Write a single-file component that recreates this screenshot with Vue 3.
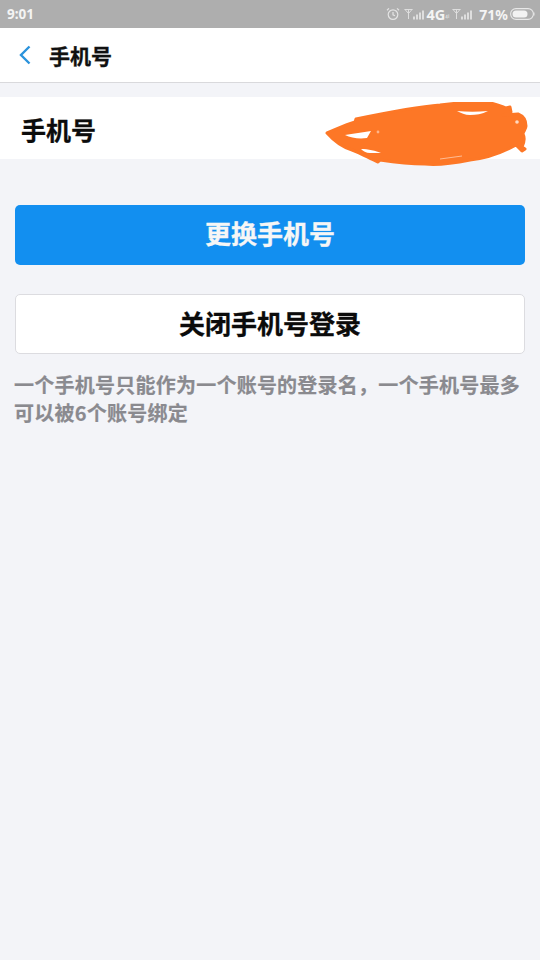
<script setup>
const sigBars = [3, 5, 7, 9]
</script>

<template>
  <div class="page">
    <div class="status">
      <span class="time">9:01</span>
      <div class="status-right">
        <svg class="alarm" width="14" height="14" viewBox="0 0 14 14" fill="none" stroke="#e4e4e4" stroke-width="1.2">
          <circle cx="7" cy="7.6" r="4.8" />
          <path d="M7 5v2.8l2 1M1 3.2 3 1.4M13 3.2 11 1.4" />
        </svg>
        <svg class="sig" width="21" height="13" viewBox="0 0 21 13" fill="none" stroke="#dedede" stroke-width="1">
          <path d="M0.500 1.500h8M1 1.500 4.500 5.500 8 1.500M4.500 1.500V11" />
          <path v-for="(h, i) in sigBars" :key="i" :d="`M${10 + i * 3} 11.500v-${h}`" stroke-width="2" />
        </svg>
        <span class="net">4G</span>
        <span class="net-small">₄ᵢ</span>
        <svg class="sig" width="21" height="13" viewBox="0 0 21 13" fill="none" stroke="#dedede" stroke-width="1">
          <path d="M0.500 1.500h8M1 1.500 4.500 5.500 8 1.500M4.500 1.500V11" />
          <path v-for="(h, i) in sigBars" :key="i" :d="`M${10 + i * 3} 11.500v-${h}`" stroke-width="2" />
        </svg>
        <span class="pct">71%</span>
        <svg class="batt" width="25" height="12" viewBox="0 0 25 12" fill="none">
          <rect x="0.600" y="0.600" width="22.800" height="10.800" rx="5.400" stroke="#e8e8e8" stroke-width="1.100" />
          <rect x="2.500" y="2.500" width="15" height="7" rx="3.500" fill="#f2f2f2" />
          <path d="M24 4.500v3" stroke="#e8e8e8" stroke-width="1" />
        </svg>
      </div>
    </div>

    <header class="nav">
      <svg class="back" width="14" height="20" viewBox="0 0 14 20" fill="none" stroke="#2b93dc" stroke-width="2.400">
        <path d="M11.500 1.500 3 10l8.500 8.500" />
      </svg>
      <span class="nav-title">手机号</span>
    </header>

    <section class="row">
      <span class="row-label">手机号</span>
      <svg class="scribble" width="204" height="66" viewBox="0 0 204 66">
        <path fill="#fd7726" stroke="#fd7726" stroke-width="3" stroke-linejoin="round" d="M2 31 C12 27 20 23 30 20 L31 17 C60 11 90 5 115 3 C130 1 150 0 165 1 C172 2 178 5 181 6 L185 5 L186 10 L178 13 L193 12 C198 14 201 18 201 24 C201 27 198 30 198 32 C200 36 199 41 197 45 L200 47 L197 49 L191 43 C180 49 165 56 145 58 C125 62 110 63 100 62 C85 62 68 60 55 58 L53 60 C45 57 38 52 27 48 C20 46 10 40 2 31 Z" />
        <path fill="#ffffff" d="M20 33 C28 32 38 30 46 29 L42 36 C34 37 26 36 20 33 Z" />
        <path fill="#ffffff" d="M36 47 C43 47 51 49 56 51 L45 51 C41 51 38 49 36 47 Z" />
        <path fill="#ffffff" d="M132 9 C142 10 153 10 163 9 C157 12 151 13 145 13 C140 13 136 11 132 9 Z" />
        <circle cx="192" cy="20" r="1.800" fill="#ffd9c0" />
        <circle cx="53" cy="30" r="1.400" fill="#ffb58a" />
        <path stroke="#ffffff" stroke-opacity="0.500" stroke-width="1" fill="none" d="M115 57 L137 54" />
      </svg>
    </section>

    <main class="body">
      <button class="btn primary" type="button">更换手机号</button>
      <button class="btn secondary" type="button">关闭手机号登录</button>
      <p class="note">一个手机号只能作为一个账号的登录名，一个手机号最多可以被6个账号绑定</p>
    </main>
  </div>
</template>

<style>
html, body { margin: 0; background: #f3f4f8; }
</style>

<style scoped>
.page {
  width: 540px;
  min-height: 960px;
  background: #f3f4f8;
  font-family: "Noto Sans CJK SC", "Liberation Sans", sans-serif;
  display: flex;
  flex-direction: column;
}
.status {
  height: 28px;
  background: #aeaeae;
  display: flex;
  align-items: center;
  justify-content: space-between;
  padding: 0 5px 0 7px;
  box-sizing: border-box;
  color: #f4f4f4;
  font-family: "Noto Sans", "Liberation Sans", sans-serif;
  font-weight: 700;
  font-size: 13.500px;
}
.status-right { display: flex; align-items: center; }
.alarm { margin-right: 4px; }
.sig { display: block; }
.net { font-size: 14.500px; margin-left: 2px; }
.net-small { font-size: 7px; width: 7px; overflow: hidden; color: #dcdcdc; }
.pct { font-size: 14px; margin-left: 6px; margin-right: 2px; }
.nav {
  height: 55px;
  background: #fff;
  border-bottom: 1px solid #d9d9dc;
  box-sizing: border-box;
  display: flex;
  align-items: center;
  padding-left: 18px;
}
.back { margin-right: 17px; }
.nav-title {
  font-size: 21px;
  font-weight: 700;
  color: #111;
  line-height: 1;
  -webkit-text-stroke: 0.300px #111;
}
.row {
  position: relative;
  margin-top: 14px;
  height: 62px;
  background: #fff;
  display: flex;
  align-items: center;
  padding-left: 21px;
}
.row-label {
  font-size: 25px;
  font-weight: 700;
  color: #0c0c0c;
  line-height: 1;
  -webkit-text-stroke: 0.300px #0c0c0c;
  padding-top: 2px;
}
.scribble { position: absolute; left: 325px; top: 5px; }
.body {
  display: flex;
  flex-direction: column;
  padding: 46px 15px 0;
}
.btn {
  height: 60px;
  border-radius: 5px;
  font-family: inherit;
  font-size: 26px;
  font-weight: 700;
  box-sizing: border-box;
}
.primary {
  padding: 0 0 6px;
  background: #128ff0;
  color: #f6f6f6;
  border: none;
  -webkit-text-stroke: 0.300px #f6f6f6;
}
.secondary {
  margin-top: 29px;
  padding: 0 0 4px;
  background: #fff;
  color: #0b0b0b;
  border: 1px solid #dcdce0;
  -webkit-text-stroke: 0.300px #0b0b0b;
}
.note {
  margin: 17px 0 0;
  margin-left: -1px;
  font-size: 20px;
  font-weight: 700;
  line-height: 28px;
  letter-spacing: 0.240px;
  color: #8a8a8f;
  -webkit-text-stroke: 0.200px #8a8a8f;
}
</style>
